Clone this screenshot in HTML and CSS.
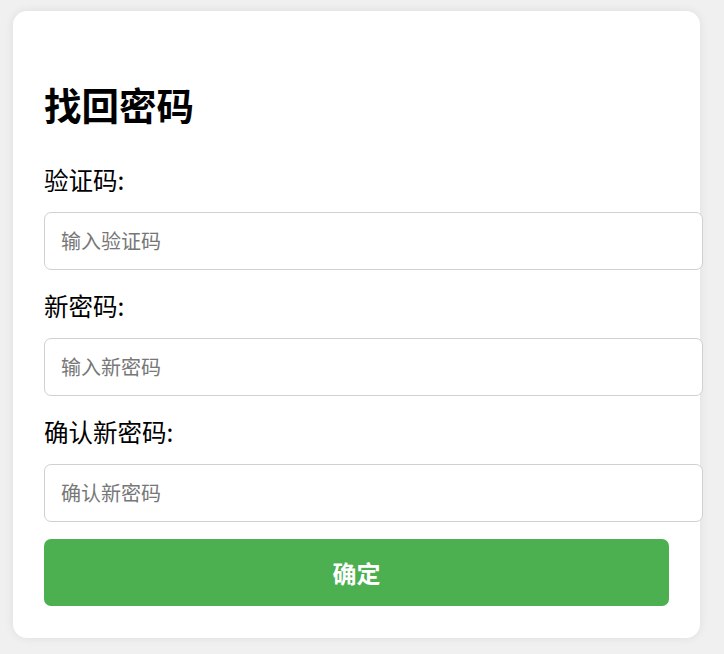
FILE: index.html
```html
<!DOCTYPE html>
<html lang="zh-CN">
<head>
    <meta charset="UTF-8">
    <meta name="viewport" content="width=device-width, initial-scale=1.0">
    <title>找回密码</title>
    <link rel="stylesheet" href="styles.css">
</head>
<body>
    <div class="card">
        <h2 class="title">找回密码</h2>
        <form class="reset-form" onsubmit="return false;">
            <label class="label" for="code">验证码:</label>
            <input class="field" type="text" id="code" placeholder="输入验证码">

            <label class="label" for="pwd">新密码:</label>
            <input class="field" type="password" id="pwd" placeholder="输入新密码">

            <label class="label" for="pwd2">确认新密码:</label>
            <input class="field last" type="password" id="pwd2" placeholder="确认新密码">

            <button class="submit" type="submit">确定</button>
        </form>
    </div>
</body>
</html>
```

FILE: styles.css
```css
* {
    font-family: "Noto Sans CJK SC", "Noto Sans", sans-serif;
}

body {
    margin: 0;
    padding: 11px 24px 17px 13px;
    background: #f0f0f0;
}

.card {
    background: #fff;
    border-radius: 14px;
    padding: 31px 31px 32px;
    box-shadow: 0 0 10px rgba(0, 0, 0, 0.08);
}

.title {
    margin: 40px 0 0;
    font-size: 37.5px;
    line-height: 44px;
    font-weight: 700;
    color: #000;
}

.reset-form {
    display: flex;
    flex-direction: column;
    align-items: flex-start;
}

.label {
    display: block;
    font-size: 24.5px;
    line-height: 32px;
    color: #000;
    margin-bottom: 16px;
}

.title + .reset-form .label:first-child {
    margin-top: 38px;
}

.field {
    width: 100%;
    padding: 15px 16px;
    font-size: 20px;
    line-height: 26px;
    border: 1px solid #d0d0d0;
    border-radius: 7px;
    margin: 0 0 20px;
    outline: none;
    background: #fff;
}

.field::placeholder {
    color: #777;
}

.field.last {
    margin-bottom: 17px;
}

.submit {
    width: 100%;
    padding: 20px 0;
    font-size: 24px;
    line-height: 27px;
    font-weight: 700;
    color: #fff;
    background: #4caf50;
    border: none;
    border-radius: 7px;
    cursor: pointer;
}
```
